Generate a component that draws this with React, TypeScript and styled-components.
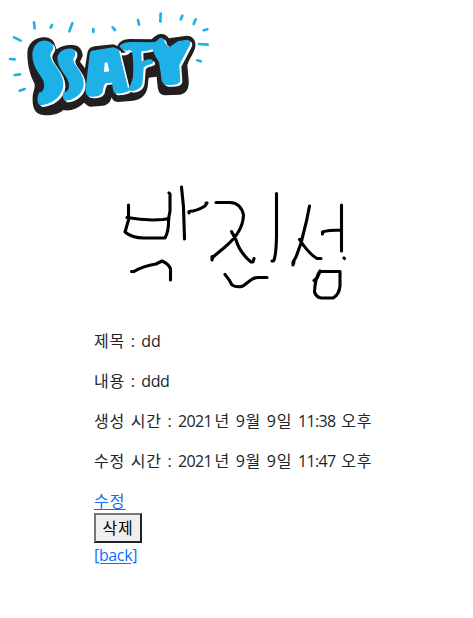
import React from "react";
import styled, { createGlobalStyle } from "styled-components";

const GlobalStyle = createGlobalStyle`
  * { box-sizing: border-box; }
  body {
    margin: 0;
    background: #fff;
    color: #212529;
    font: 400 16px/24px "Open Sans", "Noto Sans CJK KR", sans-serif;
  }
`;

const Page = styled.main`
  width: 473px;
  height: 618px;
  overflow: hidden;
`;

const Logo = styled.svg`
  display: block;
  width: 220px;
  height: 125px;
`;

const Article = styled.article`
  margin-left: 94px;
  display: flex;
  flex-direction: column;
  align-items: flex-start;
`;

const Signature = styled.svg`
  display: block;
  width: 260px;
  height: 204px;
  overflow: visible;
`;

const Line = styled.p`
  margin: 0 0 16px;
  white-space: nowrap;
  letter-spacing: 0.8px;
  word-spacing: 0.7px;
`;

const Latin = styled.span<{ $spacing?: number }>`
  letter-spacing: ${(p) => p.$spacing ?? -0.65}px;
`;

const Link = styled.a<{ $spacing: number }>`
  color: #0d6efd;
  text-decoration: underline;
  text-underline-offset: 2px;
  letter-spacing: ${(p) => p.$spacing}px;
`;

const DeleteButton = styled.button`
  width: 48px;
  height: 30px;
  padding: 0;
  border: 2px solid;
  border-color: #767676 #212121 #212121 #767676;
  border-radius: 0;
  background: #efefef;
  color: #000;
  font: inherit;
  letter-spacing: 0.9px;
`;

const letters = [
  "M128 122C145 119 160 129 160 142C160 151 150 158 151 168C154 190 190 215 190 252C190 287 160 312 122 316C112 314 112 300 113 290L118 276C128 280 136 262 131 245C124 225 97 205 97 165C97 140 112 124 128 122Z",
  "M203 146C220 143 228 150 226 164L220 178C218 195 251 215 251 250C251 283 220 302 195 302C187 295 188 290 190 275C205 278 210 262 205 245C199 225 172 205 172 175C174 155 190 148 203 146Z",
  "M276 152L340 142L356 148L386 272C380 278 360 282 345 280C340 278 338 262 336 248L316 250C312 255 310 265 308 275C303 288 290 290 275 290C258 288 256 282 257 265L268 170C270 158 270 154 276 152Z",
  "M358 138C370 127 385 125 400 126L458 127L462 145C450 152 440 154 424 154L425 184L446 178C455 176 463 183 458 190C446 197 434 195 431 205L428 245C426 262 415 271 395 273C380 272 382 264 390 257C402 240 402 190 396 154C385 148 372 160 358 138Z",
  "M452 126C462 129 470 125 478 115C487 109 494 118 495 128L507 142L535 123L563 119C573 122 573 131 566 142L538 195L541 240C540 252 525 256 500 255C485 253 484 240 483 225L477 186C468 172 458 158 452 126Z",
];

const Ssafy = () => (
  <Logo viewBox="0 0 660 375" aria-label="SSAFY">
    <path
      fill="#231f20"
      d="M82 160C82 130 105 113 132 112C150 111 163 122 166 138L170 148C180 140 195 135 212 135C235 133 248 147 248 168L240 185L255 205L262 160C265 145 272 140 290 138L340 133L352 138C360 123 370 118 390 117L455 118C465 107 475 101 484 102C495 102 502 108 507 115L555 108C575 105 589 120 586 140C582 160 568 175 562 195L566 240C568 265 560 280 540 284L495 286C480 286 475 275 473 262L470 230L446 233L444 250C444 280 425 300 400 302L355 306C342 306 338 300 335 292C330 310 320 318 300 318L270 320C262 318 258 312 252 308C235 325 210 335 190 330C175 345 140 350 120 343C100 335 97 315 98 290C100 270 107 265 103 250C90 225 82 195 82 160Z"
    />
    <g fill="#fff" transform="translate(6 5)">
      {letters.map((d) => <path key={d} d={d} />)}
    </g>
    <g fill="#1eb1e7">
      {letters.map((d) => <path key={d} d={d} />)}
    </g>
    <path fill="#fff" d="M314 188L322 187L328 214L312 216Z" />
    <path fill="#231f20" d="M368 174Q384 174 393 163Q400 193 398 235L387 245Z" />
    <path fill="none" stroke="#fff" strokeWidth="8" strokeLinecap="round" d="M366 162Q380 164 388 154" />
    <path
      fill="none"
      stroke="#1eb1e7"
      strokeWidth="8"
      strokeLinecap="round"
      d="M102 67l2 18M156 75l-4 8M217 70l-9 24M280 87v9M338 82l7 8M414 60l3 14M482 41l-1 24M547 47l-5 11M587 58l-6 14M611 91l11-3M597 132l26 2M592 181l10 3M42 112l20 10M30 177l14 1M44 225l16-2M59 272l15-5"
    />
  </Logo>
);

const NameDrawing = () => (
  <Signature viewBox="94 125 260 204" aria-label="박진성">
    <g fill="none" stroke="#000" strokeWidth="3.1" strokeLinecap="round" strokeLinejoin="round">
      <path d="M128.500 205V220L125 232Q132 238 144 238H165Q169 231 168.500 219L170 211V194L169 193M127 217.500Q146 221 163 219.500L169 218.500M181.500 187L183.500 207L184.500 239M189 213V211.500Q197 211 205 206L207 203H206M131.500 271.500H134Q143 266 156 264L162 261Q169 264 170.500 269V280" />
      <path d="M216 202.500H230Q241 203 243.500 215Q243 232 225 247L213 257L212 260V256.500M231.500 231.500L236 240Q240 253 251 262H253L254 258.500M276.500 193.500V237Q276 257 273.500 261H272M225 274.500Q229 279 232 285Q237 288 243 286C249 282 252 277 259 277.500H267" />
      <path d="M309.500 206L306.500 221L301 243L296 257L293 262V265L294 262M299.500 239.500Q309 254 317 258.500H321M322.500 234V232Q328 230 341 230M341.500 205V251M344 258L344.500 258.500M320 271C317 275 315 281 314.500 292Q316 297 321 298H333Q339 295 340 286V271.500H320L317 278L314 280.500" />
    </g>
  </Signature>
);

interface TimestampProps {
  label: string;
  time: string;
}

const Timestamp = ({ label, time }: TimestampProps) => (
  <Line>
    {label} : <Latin>2021</Latin>{"\u200a"}년 9월 9일 <Latin>{time}</Latin> 오후
  </Line>
);

export default function App() {
  return (
    <>
      <GlobalStyle />
      <Page>
        <Ssafy />
        <Article>
          <NameDrawing />
          <Line>제목 : <Latin $spacing={-0.2}>dd</Latin></Line>
          <Line>내용 : <Latin $spacing={-0.5}>ddd</Latin></Line>
          <Timestamp label="생성 시간" time="11:38" />
          <Timestamp label="수정 시간" time="11:47" />
          <Link href="#edit" $spacing={1.1}>수정</Link>
          <DeleteButton>삭제</DeleteButton>
          <Link href="#back" $spacing={-0.35}>[back]</Link>
        </Article>
      </Page>
    </>
  );
}
